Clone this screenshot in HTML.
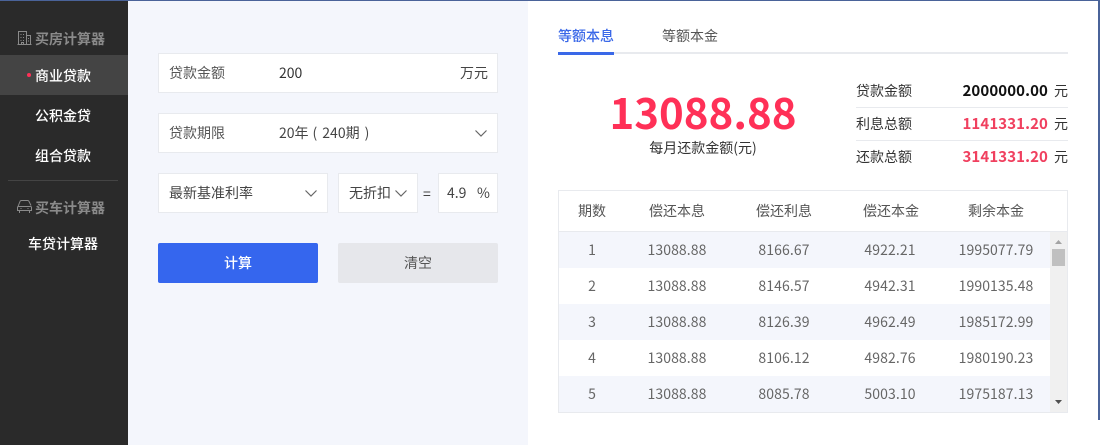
<!DOCTYPE html>
<html lang="zh-CN"><head><meta charset="utf-8"><title>买房计算器</title>
<style>
*{box-sizing:border-box;margin:0;padding:0}
html,body{width:1100px;height:445px;overflow:hidden;background:#fff}
body{position:relative;font-family:"Noto Sans CJK SC","Liberation Sans",sans-serif;font-size:14px;color:#333}
.a{position:absolute;white-space:nowrap}
.side{left:0;top:0;width:128px;height:445px;background:#2a2a2a}
.form{left:128px;top:0;width:400px;height:445px;background:#f4f6fc}
.m{left:0;width:126px;text-align:center;color:#fff;font-size:14px;line-height:20px;font-weight:500}
.h{left:35px;color:#8a8a8a;font-size:14px;line-height:20px;font-weight:700}
.box{background:#fff;border:1px solid #e8eaee;height:40px}
.t{line-height:20px;font-size:14px}
.th{width:110px;text-align:center;top:201px;line-height:20px;color:#555;font-size:14px}
.r{left:559px;width:491px;height:36px}
.c{text-align:center;line-height:20px;color:#666;font-size:14px;letter-spacing:.1px}
.sum{left:856px;line-height:20px;color:#333;font-size:14px}
.val{right:52px;line-height:20px;font-weight:700;font-size:15px;letter-spacing:.1px}
.yuan{left:1054px;line-height:20px;font-size:14px;color:#333}
</style></head><body>
<div class="a side"></div>
<div class="a form"></div>
<div class="a" style="left:0;top:0;width:1100px;height:1px;background:#4a6399"></div>
<div class="a" style="left:1098px;top:1px;width:2px;height:419px;background:#4a6399"></div>

<svg class="a" style="left:17px;top:31px" width="15" height="14" viewBox="0 0 15 14" fill="none" stroke="#8a8a8a"><path d="M.5 13.500h14M1.500 13.500V.5h8v13M9.500 4.500h4v9M3.500 3.500h1M6 3.500h1M3.500 6.500h1M6 6.500h1M3.500 9.500h1M6 9.500h1M4.500 13.500v-2h2v2M11 7.500h1M11 10h1"/></svg>
<div class="a h" style="top:29px">买房计算器</div>
<div class="a" style="left:0;top:55px;width:128px;height:40px;background:#444"></div>
<div class="a" style="left:27px;top:73px;width:4px;height:4px;border-radius:50%;background:#ff3057"></div>
<div class="a m" style="top:66px">商业贷款</div>
<div class="a m" style="top:106px">公积金贷</div>
<div class="a m" style="top:146px">组合贷款</div>
<div class="a" style="left:8px;top:180px;width:110px;height:1px;background:#444"></div>
<svg class="a" style="left:17px;top:199px" width="15" height="15" viewBox="0 0 15 15" fill="none" stroke="#8a8a8a"><path d="M1 7.500 3 2.500Q3.300 1.500 4.500 1.500h6q1.200 0 1.500 1l2 4M.5 8.500q0-1 1-1h12q1 0 1 1v3h-14zM2.500 11.500v2.500M12.500 11.500v2.500M3.500 9.500h1M10.500 9.500h1"/></svg>
<div class="a h" style="top:198px">买车计算器</div>
<div class="a m" style="top:234px">车贷计算器</div>

<div class="a box" style="left:158px;top:53px;width:340px"></div>
<div class="a t" style="left:169px;top:63px;color:#555">贷款金额</div>
<div class="a t" style="left:279px;top:63px;color:#333">200</div>
<div class="a t" style="left:460px;top:63px;color:#444">万元</div>

<div class="a box" style="left:158px;top:113px;width:340px"></div>
<div class="a t" style="left:169px;top:123px;color:#555">贷款期限</div>
<div class="a t" style="left:279px;top:123px;color:#444">20年<span style="margin-left:4px">(</span><span style="margin-left:5px">240期</span><span style="margin-left:5px">)</span></div>
<svg class="a" style="left:475px;top:130px" width="12" height="7" fill="none" stroke="#666" stroke-width="1.200"><path d="M.5.5 6 6 11.500.5"/></svg>

<div class="a box" style="left:158px;top:173px;width:170px"></div>
<div class="a t" style="left:169px;top:183px;color:#444">最新基准利率</div>
<svg class="a" style="left:305px;top:190px" width="12" height="7" fill="none" stroke="#666" stroke-width="1.200"><path d="M.5.5 6 6 11.500.5"/></svg>
<div class="a box" style="left:338px;top:173px;width:80px"></div>
<div class="a t" style="left:349px;top:183px;color:#444">无折扣</div>
<svg class="a" style="left:395px;top:190px" width="12" height="7" fill="none" stroke="#666" stroke-width="1.200"><path d="M.5.5 6 6 11.500.5"/></svg>
<div class="a t" style="left:423px;top:184px;color:#444">=</div>
<div class="a box" style="left:438px;top:173px;width:60px"></div>
<div class="a t" style="left:447px;top:183px;color:#444">4.9</div>
<div class="a t" style="left:477px;top:183px;color:#444">%</div>

<div class="a" style="left:158px;top:243px;width:160px;height:40px;border-radius:2px;background:#3566ee;color:#fff;text-align:center;line-height:40px;font-weight:500">计算</div>
<div class="a" style="left:338px;top:243px;width:160px;height:40px;border-radius:2px;background:#e6e7eb;color:#555;text-align:center;line-height:40px">清空</div>

<div class="a" style="left:558px;top:52px;width:510px;height:2px;background:#e8eaee"></div>
<div class="a" style="left:558px;top:52px;width:56px;height:3px;background:#3a68e8"></div>
<div class="a t" style="left:558px;top:26px;color:#3a68e8;font-weight:500">等额本息</div>
<div class="a t" style="left:662px;top:26px;color:#555">等额本金</div>

<div class="a" style="left:558px;top:83px;width:290px;text-align:center;font-size:42px;line-height:58px;font-weight:700;color:#ff3057">13088.88</div>
<div class="a" style="left:558px;top:138px;width:290px;text-align:center;line-height:20px;font-size:14px;color:#333">每月还款金额(元)</div>

<div class="a sum" style="top:81px">贷款金额</div>
<div class="a val" style="top:81px;color:#111">2000000.00</div>
<div class="a yuan" style="top:81px">元</div>
<div class="a" style="left:856px;width:212px;top:107px;height:1px;background:#e8eaee"></div>
<div class="a sum" style="top:114px">利息总额</div>
<div class="a val" style="top:114px;color:#f0405f">1141331.20</div>
<div class="a yuan" style="top:114px">元</div>
<div class="a" style="left:856px;width:212px;top:140px;height:1px;background:#e8eaee"></div>
<div class="a sum" style="top:147px">还款总额</div>
<div class="a val" style="top:147px;color:#f0405f">3141331.20</div>
<div class="a yuan" style="top:147px">元</div>

<div class="a" style="left:558px;top:190px;width:510px;height:223px;border:1px solid #e8eaee;background:#fff"></div>
<div class="a" style="left:559px;top:231px;width:508px;height:1px;background:#e8eaee"></div>
<div class="a th" style="left:537px;width:110px">期数</div>
<div class="a th" style="left:622px">偿还本息</div>
<div class="a th" style="left:729px">偿还利息</div>
<div class="a th" style="left:836px">偿还本金</div>
<div class="a th" style="left:941px">剩余本金</div>

<div class="a r" style="top:232px;background:#f4f6fc"></div>
<div class="a r" style="top:304px;background:#f4f6fc"></div>
<div class="a r" style="top:376px;background:#f4f6fc"></div>

<div class="a c" style="left:537px;width:110px;top:240px">1</div><div class="a c" style="left:622px;width:110px;top:240px">13088.88</div><div class="a c" style="left:729px;width:110px;top:240px">8166.67</div><div class="a c" style="left:835px;width:110px;top:240px">4922.21</div><div class="a c" style="left:941px;width:110px;top:240px">1995077.79</div>
<div class="a c" style="left:537px;width:110px;top:276px">2</div><div class="a c" style="left:622px;width:110px;top:276px">13088.88</div><div class="a c" style="left:729px;width:110px;top:276px">8146.57</div><div class="a c" style="left:835px;width:110px;top:276px">4942.31</div><div class="a c" style="left:941px;width:110px;top:276px">1990135.48</div>
<div class="a c" style="left:537px;width:110px;top:312px">3</div><div class="a c" style="left:622px;width:110px;top:312px">13088.88</div><div class="a c" style="left:729px;width:110px;top:312px">8126.39</div><div class="a c" style="left:835px;width:110px;top:312px">4962.49</div><div class="a c" style="left:941px;width:110px;top:312px">1985172.99</div>
<div class="a c" style="left:537px;width:110px;top:348px">4</div><div class="a c" style="left:622px;width:110px;top:348px">13088.88</div><div class="a c" style="left:729px;width:110px;top:348px">8106.12</div><div class="a c" style="left:835px;width:110px;top:348px">4982.76</div><div class="a c" style="left:941px;width:110px;top:348px">1980190.23</div>
<div class="a c" style="left:537px;width:110px;top:384px">5</div><div class="a c" style="left:622px;width:110px;top:384px">13088.88</div><div class="a c" style="left:729px;width:110px;top:384px">8085.78</div><div class="a c" style="left:835px;width:110px;top:384px">5003.10</div><div class="a c" style="left:941px;width:110px;top:384px">1975187.13</div>

<div class="a" style="left:1050px;top:232px;width:17px;height:180px;background:#f0f0f0"></div>
<div class="a" style="left:1052px;top:249px;width:13px;height:17px;background:#c0c0c0"></div>
<svg class="a" style="left:1050px;top:232px" width="17" height="180"><path d="M5 12l3.500-4 3.500 4z" fill="#a3a3a3"/><path d="M5 168l3.500 4 3.500-4z" fill="#505050"/></svg>
</body></html>
